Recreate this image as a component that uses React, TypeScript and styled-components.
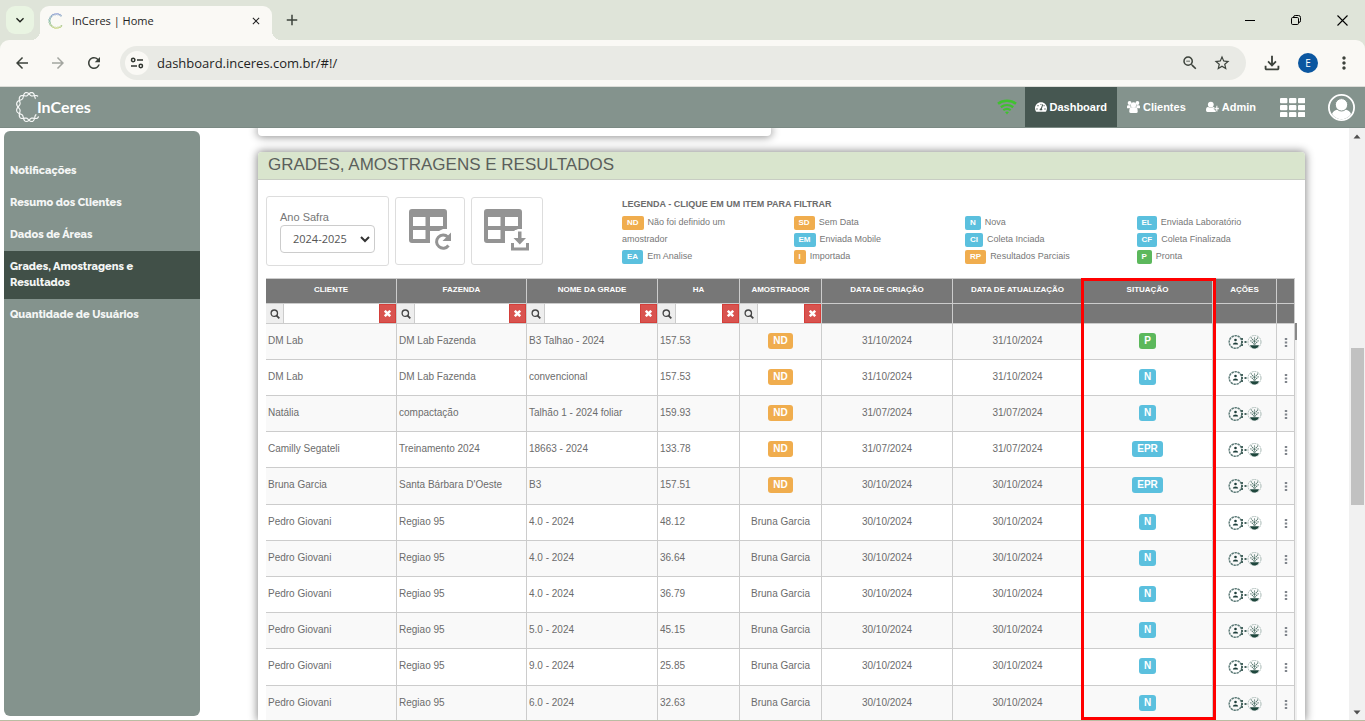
import React from 'react';
import styled, { createGlobalStyle, css } from 'styled-components';
import { FaTachometerAlt } from 'react-icons/fa';
import {
  MdArrowBack, MdArrowForward, MdRefresh, MdOutlineFileDownload, MdStarBorder,
  MdOutlineZoomOut, MdMoreVert, MdAdd, MdClose, MdKeyboardArrowDown,
} from 'react-icons/md';

const GlobalStyle = createGlobalStyle`
  *, *::before, *::after { box-sizing: border-box; }
  body { margin: 0; background: #fff; font-family: "Liberation Sans", Arial, sans-serif; }
  button, input, select { font-family: inherit; }
  button { padding: 0; border: 0; background: none; cursor: pointer; }
  a { color: inherit; text-decoration: none; }
`;

const uiFont = '"Open Sans", "Noto Sans", sans-serif';

const Window = styled.div`
  display: flex;
  flex-direction: column;
  height: 100vh;
  overflow: hidden;
  border-bottom: 1px solid #b9bda3;
`;

/* ---------- browser chrome ---------- */

const TabStrip = styled.div`
  display: flex;
  align-items: flex-start;
  flex: 0 0 40px;
  padding: 6px 0 0 6px;
  background: #dfe4d9;
`;

const TabSearch = styled.button`
  display: flex;
  align-items: center;
  justify-content: center;
  width: 28px;
  height: 28px;
  margin-right: 6px;
  border-radius: 9px;
  background: #e9f4e2;
  color: #1d211b;
`;

const Tab = styled.div`
  position: relative;
  display: flex;
  align-items: center;
  width: 232px;
  height: 34px;
  padding: 0 10px 4px 8px;
  border-radius: 9px 9px 0 0;
  background: #faf9f5;
  color: #1f1f1f;
  font: 11px/20px ${uiFont};
  &::before, &::after {
    content: '';
    position: absolute;
    bottom: 0;
    width: 9px;
    height: 9px;
  }
  &::before { right: 100%; background: radial-gradient(circle at 0 0, transparent 9px, #faf9f5 9px); }
  &::after { left: 100%; background: radial-gradient(circle at 100% 0, transparent 9px, #faf9f5 9px); }
`;

const TabTitle = styled.span`
  flex: 1;
  margin-left: 8px;
`;

const IconButton = styled.button<{ $w?: number; $color?: string }>`
  display: flex;
  align-items: center;
  justify-content: center;
  width: ${p => p.$w ?? 28}px;
  height: 28px;
  color: ${p => p.$color ?? '#3c423b'};
`;

const TabClose = styled(IconButton)`
  width: 12px;
  color: #1f1f1f;
`;

const NewTab = styled(IconButton)`
  margin-left: 6px;
`;

const WindowControls = styled.div`
  display: flex;
  margin-left: auto;
`;

const ToolbarBack = styled.div`
  display: flex;
  flex: 0 0 47px;
  background: #dfe4d9;
`;

const Toolbar = styled.div`
  display: flex;
  align-items: center;
  flex: 1;
  padding: 0 6px 0 4px;
  border-bottom: 1px solid #dcddd8;
  border-radius: 9px 9px 0 0;
  background: #faf9f5;
`;

const AddressBar = styled.div`
  display: flex;
  align-items: center;
  flex: 1;
  height: 34px;
  margin: 0 8px;
  padding: 0 8px 0 5px;
  border-radius: 17px;
  background: #e9eae5;
`;

const SiteInfo = styled.button`
  display: flex;
  align-items: center;
  justify-content: center;
  width: 24px;
  height: 24px;
  border-radius: 50%;
  background: #faf9f5;
`;

const Address = styled.input`
  flex: 1;
  height: 24px;
  margin-left: 8px;
  padding: 0;
  border: 0;
  outline: 0;
  background: none;
  color: #1f1f1f;
  font: 13px/24px ${uiFont};
`;

const Profile = styled.button`
  width: 20px;
  height: 20px;
  margin: 0 11px 0 8px;
  border-radius: 50%;
  background: #0b57a0;
  color: #fff;
  font: 10px/20px ${uiFont};
`;

/* ---------- application header ---------- */

const Header = styled.header`
  display: flex;
  align-items: flex-start;
  flex: 0 0 41px;
  padding: 0 10px 0 15px;
  border-bottom: 1px solid #7b8a84;
  background: #84938d;
  color: #fff;
`;

const Brand = styled.a`
  display: flex;
  align-items: center;
  height: 40px;
  margin-right: auto;
  color: #fff;
  font: 700 16px/20px Lato, sans-serif;
`;

const BrandName = styled.span`
  margin-left: -4px;
`;

const Nav = styled.nav`
  display: flex;
  align-items: center;
  height: 40px;
`;

const NavLink = styled.a<{ $active?: boolean }>`
  display: flex;
  align-items: center;
  gap: 3px;
  height: 40px;
  padding: 0 10px;
  font-size: 11px;
  font-weight: 700;
  background: ${p => (p.$active ? '#465751' : 'transparent')};
`;

const Signal = styled.span`
  display: flex;
  margin-right: 8px;
  color: #3fc22f;
`;

const NavIcon = styled.button<{ $gap: number }>`
  display: flex;
  margin-left: ${p => p.$gap}px;
  color: #fff;
`;

/* ---------- page ---------- */

const Page = styled.div`
  display: flex;
  flex: 1;
  min-height: 0;
`;

const Sidebar = styled.aside`
  flex: 0 0 196px;
  margin: 3px 0 4px 4px;
  padding-top: 24px;
  border-radius: 6px;
  background: #84938d;
`;

const SideLink = styled.a<{ $active?: boolean }>`
  display: block;
  padding: 8px 40px 8px 6px;
  background: ${p => (p.$active ? '#415048' : 'transparent')};
  color: #f4f6f5;
  font: 800 11px/16px Raleway, Lato, sans-serif;
`;

const Main = styled.main`
  display: flex;
  flex-direction: column;
  flex: 1;
  min-width: 0;
  padding: 0 44px 0 58px;
  overflow: hidden;
`;

const cardShadow = css`
  box-shadow: 0 0 8px 1px rgba(0, 0, 0, 0.45);
`;

const PreviousCard = styled.section`
  flex: 0 0 8px;
  width: 49%;
  margin-bottom: 16px;
  border-radius: 0 0 4px 4px;
  background: #fff;
  ${cardShadow}
`;

const Panel = styled.section`
  display: flex;
  flex-direction: column;
  flex: 1;
  min-height: 0;
  border-radius: 4px 4px 0 0;
  background: #fff;
  ${cardShadow}
`;

const PanelTitle = styled.h2`
  flex: 0 0 28px;
  margin: 0;
  padding: 0 10px;
  border-bottom: 1px solid #c8cdc3;
  border-radius: 4px 4px 0 0;
  background: #d9e5cd;
  color: #5b5f5b;
  font-size: 17px;
  font-weight: 400;
  line-height: 25px;
`;

const Tools = styled.div`
  display: flex;
  align-items: center;
  gap: 6px;
  flex: 0 0 70px;
  margin: 16px -3px 12px 8px;
`;

const SeasonBox = styled.div`
  width: 123px;
  height: 70px;
  padding: 12px 13px 0;
  border: 1px solid #ddd;
  border-radius: 3px;
`;

const SeasonLabel = styled.label`
  display: block;
  color: #777;
  font-size: 11px;
  line-height: 16px;
`;

const SeasonField = styled.div`
  position: relative;
  color: #333;
`;

const SeasonSelect = styled.select`
  appearance: none;
  display: block;
  width: 95px;
  height: 28px;
  padding: 0 12px;
  border: 1px solid #ccc;
  border-radius: 4px;
  background: #fff;
  color: #555;
  font: 11px/16px ${uiFont};
`;

const Chevron = styled.svg`
  position: absolute;
  right: 5px;
  top: 11px;
  pointer-events: none;
`;

const ToolButton = styled.button<{ $w: number }>`
  display: flex;
  justify-content: center;
  width: ${p => p.$w}px;
  height: 68px;
  padding-top: 9px;
  border: 1px solid #ddd;
  border-radius: 3px;
`;

const Legend = styled.div`
  flex: 1;
  align-self: flex-start;
  margin-left: 73px;
  color: #777;
  font-size: 9px;
`;

const LegendTitle = styled.h3`
  margin: 0 0 2px;
  color: #6c6c6c;
  font-size: 9px;
  line-height: 16px;
`;

const LegendColumns = styled.div`
  display: grid;
  grid-template-columns: repeat(4, 1fr);
`;

const LegendItem = styled.button`
  display: block;
  padding-right: 40px;
  color: #777;
  font-size: 9px;
  line-height: 17px;
  text-align: left;
`;

const tones = { orange: '#f0ad4e', blue: '#5bc0de', green: '#5cb85c' };
type Tone = keyof typeof tones;

const Badge = styled.span<{ $tone: Tone; $small?: boolean }>`
  display: inline-block;
  padding: 0 5px;
  border-radius: ${p => (p.$small ? 2 : 3)}px;
  background: ${p => tones[p.$tone]};
  color: #fff;
  font-size: ${p => (p.$small ? 8 : 10)}px;
  font-weight: 700;
  line-height: ${p => (p.$small ? 14 : 16)}px;
  margin-right: ${p => (p.$small ? 4 : 0)}px;
`;

/* ---------- table ---------- */

const TableArea = styled.div`
  position: relative;
  display: flex;
  flex: 1;
  align-items: flex-start;
  min-height: 0;
  margin: 0 8px;
`;

const TableClip = styled.div`
  flex: 1;
  align-self: stretch;
  overflow: hidden;
`;

const Grid = styled.table`
  width: 100%;
  table-layout: fixed;
  border-collapse: separate;
  border-spacing: 0;
  border-top: 1px solid #ccc;
  color: #6c6c6c;
  font-size: 10px;
`;

const HeadCell = styled.th`
  height: 25px;
  padding: 0 2px 2px;
  border-right: 1px solid #ccc;
  border-bottom: 1px solid #ccc;
  background: #777;
  color: #fff;
  font-size: 8px;
  line-height: 12px;
  white-space: nowrap;
`;

const FilterCell = styled.td`
  height: 20px;
  padding: 0;
  border-right: 1px solid #ccc;
  border-bottom: 1px solid #ccc;
  background: #777;
`;

const FilterGroup = styled.div`
  display: flex;
  height: 19px;
`;

const FilterIcon = styled.label`
  display: flex;
  align-items: center;
  justify-content: center;
  flex: 0 0 18px;
  border-right: 1px solid #ccc;
  background: #eee;
`;

const FilterInput = styled.input`
  flex: 1;
  min-width: 0;
  padding: 0 4px;
  border: 0;
  border-radius: 0;
  background: #fff;
  font-size: 10px;
`;

const FilterClear = styled.button`
  display: flex;
  align-items: center;
  justify-content: center;
  flex: 0 0 17px;
  border: 1px solid #d43f3a;
  background: #d9534f;
`;

const BodyRow = styled.tr`
  height: 36px;
  &:nth-child(odd) { background: #f9f9f9; }
  &:nth-child(5n) { height: 37px; }
`;

const Cell = styled.td<{ $center?: boolean }>`
  padding: 0 2px 2px;
  border-right: 1px solid #ccc;
  border-bottom: 1px solid #ccc;
  line-height: 16px;
  text-align: ${p => (p.$center ? 'center' : 'left')};
  white-space: nowrap;
`;

const Actions = styled.button`
  display: flex;
  margin: 2px auto 0;
`;

const RowMenu = styled.button`
  display: flex;
  margin: 4px auto 0;
`;

const InnerScroll = styled.div`
  align-self: stretch;
  flex: 0 0 2px;
  margin-top: 45px;
  background: #f0f0f0;
`;

const InnerThumb = styled.div`
  height: 17px;
  background: #888;
`;

const Highlight = styled.div`
  position: absolute;
  top: 0;
  right: 81px;
  bottom: 0;
  width: 135px;
  border: 3px solid #f00;
  pointer-events: none;
`;

const ScrollBar = styled.div`
  display: flex;
  flex-direction: column;
  align-items: center;
  flex: 0 0 16px;
  padding: 6px 0 5px;
  background: #f1f1f1;
`;

const ScrollSpace = styled.div<{ $grow: number }>`
  flex: ${p => p.$grow} 1 0;
`;

const ScrollThumb = styled.div`
  flex: 158 1 0;
  width: 13px;
  background: #c1c1c1;
`;

/* ---------- drawings ---------- */

function strand(cx: number, cy: number, rx: number, ry: number, amp: number, turns: number, phase: number) {
  const points: string[] = [];
  const from = 0.22 * Math.PI;
  const to = 1.75 * Math.PI;
  for (let i = 0; i <= 120; i++) {
    const t = from + ((to - from) * i) / 120;
    const d = amp * Math.sin(turns * t + phase);
    points.push(`${(cx + (rx + d) * Math.cos(t)).toFixed(2)},${(cy + (ry + d) * Math.sin(t)).toFixed(2)}`);
  }
  return points.join(' ');
}

const BrandRing = () => (
  <svg width="26" height="32" viewBox="0 0 26 32" fill="none" stroke="#f4f6f5" strokeWidth="1.2">
    <polyline points={strand(14, 16, 11, 13.2, 1.7, 6, 0)} />
    <polyline points={strand(14, 16, 11, 13.2, 1.7, 6, Math.PI)} />
  </svg>
);

const Favicon = () => (
  <svg width="16" height="16" viewBox="0 0 16 16" fill="none">
    <defs>
      <linearGradient id="ring" x1="0" y1="0" x2="0" y2="1">
        <stop offset="0" stopColor="#7b8ed0" />
        <stop offset="0.5" stopColor="#5fa58c" />
        <stop offset="1" stopColor="#c3cf6a" />
      </linearGradient>
    </defs>
    <polyline points={strand(8.5, 8, 7, 7, 0.7, 8, 0)} stroke="url(#ring)" strokeWidth="0.9" />
    <polyline points={strand(8.5, 8, 7, 7, 0.7, 8, Math.PI)} stroke="url(#ring)" strokeWidth="0.7" />
  </svg>
);

const TuneIcon = () => (
  <svg width="14" height="14" viewBox="0 0 14 14" fill="none" stroke="#30352f" strokeWidth="1.5">
    <circle cx="3.2" cy="4" r="1.7" />
    <path d="M7 4h6M1 10h6" />
    <circle cx="10.8" cy="10" r="1.7" />
  </svg>
);

const MinimizeIcon = () => (
  <svg width="10" height="10" viewBox="0 0 10 10" stroke="#000"><path d="M0 5.5h10" /></svg>
);

const RestoreIcon = () => (
  <svg width="10" height="10" viewBox="0 0 10 10" fill="none" stroke="#000">
    <rect x="0.5" y="2.5" width="7" height="7" rx="1.2" />
    <path d="M2.5 2.2Q2.6 0.5 4.2 0.5H7.5Q9.5 0.5 9.5 2.5V5.8Q9.5 7.4 7.8 7.5" />
  </svg>
);

const ExitIcon = () => (
  <svg width="11" height="11" viewBox="0 0 11 11" stroke="#000" strokeWidth="1.1"><path d="M.5 .5l10 10M10.5 .5l-10 10" /></svg>
);

const WifiIcon = () => (
  <svg width="20" height="16" viewBox="0 0 20 16" fill="none" stroke="currentColor">
    <path d="M1 4.800C6.200.8 13.800.8 19 4.800" strokeWidth="2.600" />
    <path d="M3.800 8.200C7.500 5.400 12.500 5.400 16.200 8.200" strokeWidth="2.400" />
    <path d="M6.300 11.200C8.500 9.600 11.500 9.600 13.700 11.200" strokeWidth="2.200" />
    <path d="M8 12.900Q10 12 12 12.900L10 15.500z" fill="currentColor" stroke="none" />
  </svg>
);

const GroupIcon = () => (
  <svg width="13" height="12" viewBox="0 0 13 12" fill="#fff">
    <circle cx="2.600" cy="2" r="1.900" />
    <circle cx="10.400" cy="2" r="1.900" />
    <path d="M0 7.300V5.600Q0 4.200 1.300 4.200H3.600V7.300zM13 7.300V5.600Q13 4.200 11.700 4.200H9.400V7.300z" />
    <circle cx="6.500" cy="4" r="2.700" />
    <path d="M2.300 10.500Q2.300 6.300 4.500 6.300h4q2.200 0 2.200 4.200Q10.700 12 9.200 12H3.800Q2.300 12 2.300 10.500z" />
  </svg>
);

const AddUserIcon = () => (
  <svg width="13" height="12" viewBox="0 0 13 12" fill="#fff">
    <circle cx="4.800" cy="3.600" r="2.900" />
    <path d="M0 9.200Q0 6 2 6q2.800 1.300 5.600 0 .9 0 1.200.9v2.300h1V11H1.400Q0 11 0 9.200z" />
    <path d="M10 4.800h1.700v2H13.500v1.600h-1.800v2H10v-2H8.200V6.800H10z" stroke="#84938d" strokeWidth="0.500" />
  </svg>
);

const SearchIcon = () => (
  <svg width="10" height="10" viewBox="0 0 10 10" fill="none" stroke="#444">
    <circle cx="4.300" cy="4.200" r="3.200" strokeWidth="1.300" />
    <path d="M6.600 6.600l2.700 2.700" strokeWidth="1.800" />
  </svg>
);

const ClearIcon = () => (
  <svg width="7" height="7" viewBox="0 0 7 7" stroke="#fff" strokeWidth="2.500"><path d="M.8 .8l5.400 5.400M6.200 .8L.8 6.200" /></svg>
);

const AppsIcon = () => (
  <svg width="25" height="19" viewBox="0 0 25 19" fill="#fff">
    {[0, 7, 14].map(y => [0, 9, 18].map(x => (
      <rect key={`${x}-${y}`} x={x} y={y} width="7.4" height="5.2" rx="1" />
    )))}
  </svg>
);

const AvatarIcon = () => (
  <svg width="27" height="27" viewBox="0 0 27 27">
    <defs><clipPath id="face"><circle cx="13.5" cy="13.5" r="11.5" /></clipPath></defs>
    <circle cx="13.5" cy="13.5" r="12.6" fill="none" stroke="#fff" strokeWidth="1.8" />
    <g clipPath="url(#face)" fill="#fff">
      <path d="M4 27V20q1-3.500 5.500-4.500h8q4.500 1 5.500 4.500v7z" />
      <circle cx="13.500" cy="10.800" r="6.200" stroke="#84938d" strokeWidth="1" />
    </g>
  </svg>
);

const TableShape = () => (
  <path
    fillRule="evenodd"
    d="M3 0H35Q38 0 38 3V20H34L30 22H21V34H3Q0 34 0 31V3Q0 0 3 0ZM4 8V17H16.500V8ZM21 8V17H34V8ZM4 21V30H16.500V21Z"
  />
);

const TableRefreshIcon = () => (
  <svg width="43" height="46" viewBox="0 -2 43 46" fill="#949494">
    <TableShape />
    <circle cx="34" cy="32.500" r="11" fill="#fff" />
    <path d="M39.500 36.500a6.600 6.600 0 1 1-.6-8.500" fill="none" stroke="#949494" strokeWidth="3" />
    <path d="M42 23.500v8.500h-8.500z" />
  </svg>
);

const TableDownloadIcon = () => (
  <svg width="46" height="46" viewBox="0 -2 46 46" fill="#949494">
    <TableShape />
    <path d="M24 44V32h4l3-11h9l3 12h3v11z" fill="#fff" />
    <path d="M34 22.500h3.500v6.500h4.500l-6.200 6.500L29.500 29H34zM27 34h3v4.500h12V34h3v7.500H27z" />
  </svg>
);

const ActionIcon = () => (
  <svg width="34" height="16" viewBox="0 0 34 16" fill="none">
    <circle cx="7.500" cy="8" r="6.300" stroke="#5c7a77" strokeWidth="1.500" strokeDasharray="2.400 0.700" />
    <circle cx="7.500" cy="6" r="1.300" fill="#1f3f3b" />
    <path d="M4.800 10.600Q5 8.400 7.500 8.400t2.700 2.200z" fill="#1f3f3b" />
    <path d="M13 5h2M13 11h2M13 8h2M16.500 8h2" stroke="#47645f" strokeWidth="1.900" />
    <circle cx="26.500" cy="8" r="6.500" stroke="#a9bab6" strokeWidth="1" strokeDasharray="2 0.700" />
    <path d="M26.500 3.500v8M23 3.500l3.500 4.500L30 3.500M22.500 6.500l4 4 4-4" stroke="#55766d" strokeWidth="1.100" strokeDasharray="1.300 0.700" />
    <path d="M22 11.200h9q-1.500 3.300-4.500 3.300T22 11.200z" fill="#1e463c" />
  </svg>
);

const DotsIcon = () => (
  <svg width="4" height="10" viewBox="0 0 4 10" fill="#80858c">
    <rect x="0.800" y="0" width="2.400" height="2" /><rect x="0.800" y="3.500" width="2.400" height="2" /><rect x="0.800" y="7" width="2.400" height="2" />
  </svg>
);

/* ---------- data ---------- */

const legend: [string, Tone, string][][] = [
  [['ND', 'orange', 'Não foi definido um amostrador'], ['EA', 'blue', 'Em Analise']],
  [['SD', 'orange', 'Sem Data'], ['EM', 'blue', 'Enviada Mobile'], ['I', 'orange', 'Importada']],
  [['N', 'blue', 'Nova'], ['CI', 'blue', 'Coleta Inciada'], ['RP', 'orange', 'Resultados Parciais']],
  [['EL', 'blue', 'Enviada Laboratório'], ['CF', 'blue', 'Coleta Finalizada'], ['P', 'green', 'Pronta']],
];

const columns: { title: string; width: number; filter?: boolean }[] = [
  { title: 'CLIENTE', width: 131, filter: true },
  { title: 'FAZENDA', width: 130, filter: true },
  { title: 'NOME DA GRADE', width: 131, filter: true },
  { title: 'HA', width: 82, filter: true },
  { title: 'AMOSTRADOR', width: 82, filter: true },
  { title: 'DATA DE CRIAÇÃO', width: 131 },
  { title: 'DATA DE ATUALIZAÇÃO', width: 130 },
  { title: 'SITUAÇÃO', width: 130 },
  { title: 'AÇÕES', width: 64 },
  { title: '', width: 18 },
];

const rows: string[][] = [
  ['DM Lab', 'DM Lab Fazenda', 'B3 Talhao - 2024', '157.53', 'ND', '31/10/2024', 'P'],
  ['DM Lab', 'DM Lab Fazenda', 'convencional', '157.53', 'ND', '31/10/2024', 'N'],
  ['Natália', 'compactação', 'Talhão 1 - 2024 foliar', '159.93', 'ND', '31/07/2024', 'N'],
  ['Camilly Segateli', 'Treinamento 2024', '18663 - 2024', '133.78', 'ND', '31/07/2024', 'EPR'],
  ['Bruna Garcia', "Santa Bárbara D'Oeste", 'B3', '157.51', 'ND', '30/10/2024', 'EPR'],
  ['Pedro Giovani', 'Regiao 95', '4.0 - 2024', '48.12', 'Bruna Garcia', '30/10/2024', 'N'],
  ['Pedro Giovani', 'Regiao 95', '4.0 - 2024', '36.64', 'Bruna Garcia', '30/10/2024', 'N'],
  ['Pedro Giovani', 'Regiao 95', '4.0 - 2024', '36.79', 'Bruna Garcia', '30/10/2024', 'N'],
  ['Pedro Giovani', 'Regiao 95', '5.0 - 2024', '45.15', 'Bruna Garcia', '30/10/2024', 'N'],
  ['Pedro Giovani', 'Regiao 95', '9.0 - 2024', '25.85', 'Bruna Garcia', '30/10/2024', 'N'],
  ['Pedro Giovani', 'Regiao 95', '6.0 - 2024', '32.63', 'Bruna Garcia', '30/10/2024', 'N'],
];

const sections = ['Notificações', 'Resumo dos Clientes', 'Dados de Áreas', 'Grades, Amostragens e Resultados', 'Quantidade de Usuários'];

export default function App() {
  return (
    <Window>
      <GlobalStyle />
      <TabStrip>
        <TabSearch aria-label="Pesquisar guias"><MdKeyboardArrowDown size={16} /></TabSearch>
        <Tab>
          <Favicon />
          <TabTitle>InCeres | Home</TabTitle>
          <TabClose aria-label="Fechar guia"><MdClose size={14} /></TabClose>
        </Tab>
        <NewTab aria-label="Nova guia"><MdAdd size={18} /></NewTab>
        <WindowControls>
          <IconButton $w={46} aria-label="Minimizar"><MinimizeIcon /></IconButton>
          <IconButton $w={46} aria-label="Restaurar"><RestoreIcon /></IconButton>
          <IconButton $w={46} aria-label="Fechar"><ExitIcon /></IconButton>
        </WindowControls>
      </TabStrip>
      <ToolbarBack>
        <Toolbar>
          <IconButton $w={36} aria-label="Voltar"><MdArrowBack size={18} /></IconButton>
          <IconButton $w={36} $color="#a3a6a0" aria-label="Avançar"><MdArrowForward size={18} /></IconButton>
          <IconButton $w={36} aria-label="Recarregar"><MdRefresh size={18} /></IconButton>
          <AddressBar>
            <SiteInfo aria-label="Informações do site"><TuneIcon /></SiteInfo>
            <Address aria-label="Endereço" defaultValue="dashboard.inceres.com.br/#!/" />
            <IconButton $w={32} aria-label="Zoom"><MdOutlineZoomOut size={18} /></IconButton>
            <IconButton $w={32} aria-label="Favoritar"><MdStarBorder size={18} /></IconButton>
          </AddressBar>
          <IconButton $w={36} aria-label="Downloads"><MdOutlineFileDownload size={22} /></IconButton>
          <Profile aria-label="Perfil">E</Profile>
          <IconButton $w={30} aria-label="Menu"><MdMoreVert size={20} /></IconButton>
        </Toolbar>
      </ToolbarBack>

      <Header>
        <Brand href="#"><BrandRing /><BrandName>InCeres</BrandName></Brand>
        <Nav>
          <Signal><WifiIcon /></Signal>
          <NavLink href="#" $active><FaTachometerAlt size={12} />Dashboard</NavLink>
          <NavLink href="#"><GroupIcon />Clientes</NavLink>
          <NavLink href="#"><AddUserIcon />Admin</NavLink>
          <NavIcon $gap={14} aria-label="Aplicativos"><AppsIcon /></NavIcon>
          <NavIcon $gap={23} aria-label="Conta"><AvatarIcon /></NavIcon>
        </Nav>
      </Header>

      <Page>
        <Sidebar>
          <nav>
            {sections.map((s, i) => <SideLink key={s} href="#" $active={i === 3}>{s}</SideLink>)}
          </nav>
        </Sidebar>
        <Main>
          <PreviousCard />
          <Panel>
            <PanelTitle>GRADES, AMOSTRAGENS E RESULTADOS</PanelTitle>
            <Tools>
              <SeasonBox>
                <SeasonLabel htmlFor="season">Ano Safra</SeasonLabel>
                <SeasonField>
                  <SeasonSelect id="season" defaultValue="2024-2025"><option>2024-2025</option></SeasonSelect>
                  <Chevron width="10" height="7" viewBox="0 0 10 7" fill="none" stroke="currentColor" strokeWidth="2">
                    <path d="M1 1l4 4 4-4" />
                  </Chevron>
                </SeasonField>
              </SeasonBox>
              <ToolButton $w={70} aria-label="Atualizar tabela"><TableRefreshIcon /></ToolButton>
              <ToolButton $w={72} aria-label="Baixar tabela"><TableDownloadIcon /></ToolButton>
              <Legend>
                <LegendTitle>LEGENDA - CLIQUE EM UM ITEM PARA FILTRAR</LegendTitle>
                <LegendColumns>
                  {legend.map((items, i) => (
                    <div key={i}>
                      {items.map(([code, tone, text]) => (
                        <LegendItem key={code}><Badge $tone={tone} $small>{code}</Badge>{text}</LegendItem>
                      ))}
                    </div>
                  ))}
                </LegendColumns>
              </Legend>
            </Tools>
            <TableArea>
              <TableClip>
                <Grid>
                  <colgroup>{columns.map((c, i) => <col key={i} width={c.width} />)}</colgroup>
                  <thead>
                    <tr>{columns.map((c, i) => <HeadCell key={i} scope="col">{c.title}</HeadCell>)}</tr>
                    <tr>
                      {columns.map((c, i) => (
                        <FilterCell key={i}>
                          {c.filter && (
                            <FilterGroup>
                              <FilterIcon htmlFor={`filter-${i}`}><SearchIcon /></FilterIcon>
                              <FilterInput id={`filter-${i}`} aria-label={c.title} />
                              <FilterClear aria-label="Limpar"><ClearIcon /></FilterClear>
                            </FilterGroup>
                          )}
                        </FilterCell>
                      ))}
                    </tr>
                  </thead>
                  <tbody>
                    {rows.map(([client, farm, name, ha, sampler, date, status], i) => (
                      <BodyRow key={i}>
                        <Cell>{client}</Cell>
                        <Cell>{farm}</Cell>
                        <Cell>{name}</Cell>
                        <Cell>{ha}</Cell>
                        <Cell $center>{sampler === 'ND' ? <Badge $tone="orange">ND</Badge> : sampler}</Cell>
                        <Cell $center>{date}</Cell>
                        <Cell $center>{date}</Cell>
                        <Cell $center><Badge $tone={status === 'P' ? 'green' : 'blue'}>{status}</Badge></Cell>
                        <Cell><Actions aria-label="Ações"><ActionIcon /></Actions></Cell>
                        <Cell><RowMenu aria-label="Mais opções"><DotsIcon /></RowMenu></Cell>
                      </BodyRow>
                    ))}
                  </tbody>
                </Grid>
              </TableClip>
              <InnerScroll><InnerThumb /></InnerScroll>
              <Highlight />
            </TableArea>
          </Panel>
        </Main>
        <ScrollBar>
          <svg width="8" height="5" viewBox="0 0 8 5" fill="#505050"><path d="M4 .5L7.500 4.500H.5z" /></svg>
          <ScrollSpace $grow={209} />
          <ScrollThumb />
          <ScrollSpace $grow={205} />
          <svg width="8" height="5" viewBox="0 0 8 5" fill="#505050"><path d="M.5 .5h7L4 4.500z" /></svg>
        </ScrollBar>
      </Page>
    </Window>
  );
}
